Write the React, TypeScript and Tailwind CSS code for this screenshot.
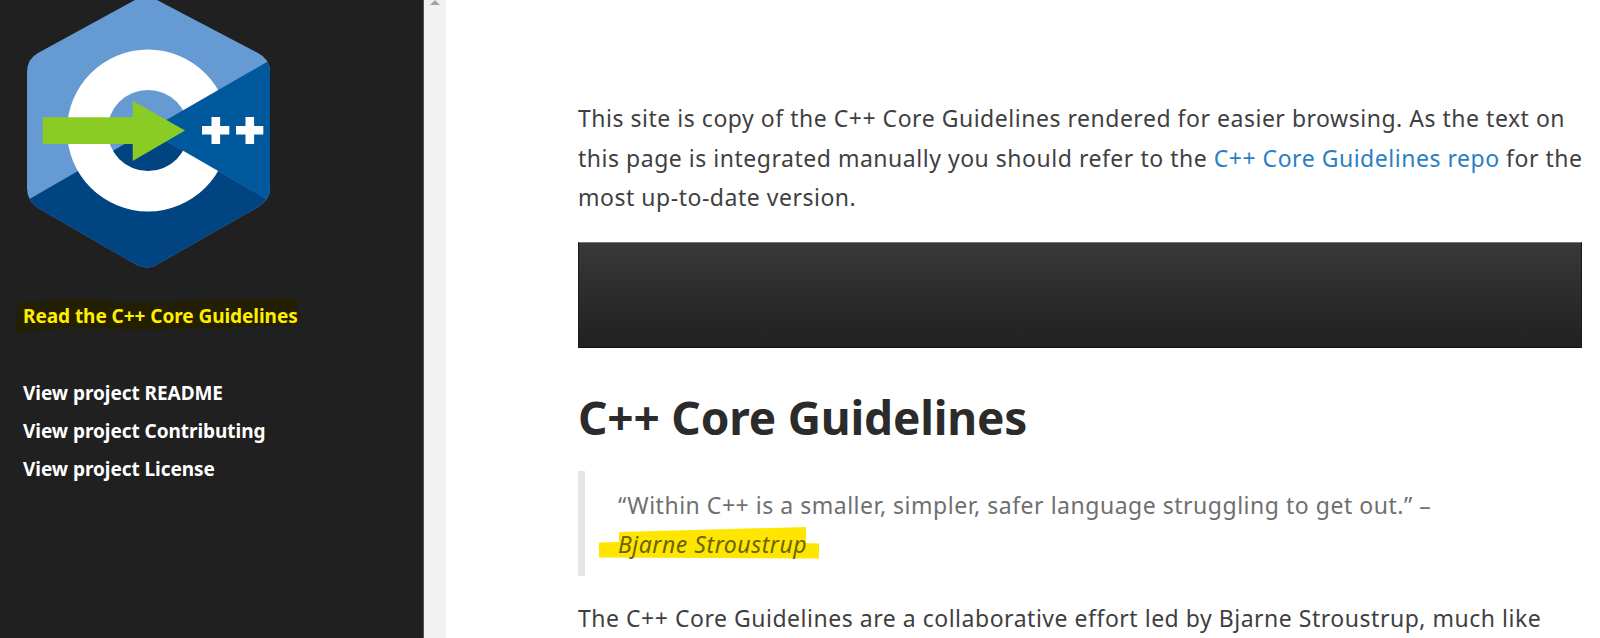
function Logo() {
  return (
    <svg width="272" height="268" viewBox="0 0 272 268" className="block shrink-0">
      <defs>
        <clipPath id="hex">
          <path d="M135 0 L38 53 Q27 59 27 72 L27 188 Q27 201 38 208 L135 264 Q148 271 158 264 L258 207 Q270 200 270 188 L270 72 Q270 59 258 53 L157 0 Q148 -6 135 0 Z" />
        </clipPath>
      </defs>
      <g clipPath="url(#hex)">
        <rect x="0" y="-10" width="300" height="290" fill="#659AD2" />
        <polygon points="148,130.5 0,216 0,300 300,300 300,218" fill="#004482" />
        <path
          fillRule="evenodd"
          fill="#ffffff"
          d="M148 49.5 A81 81 0 1 0 148 211.5 A81 81 0 1 0 148 49.5 Z M148 90 A40.5 40.5 0 1 1 148 171 A40.5 40.5 0 1 1 148 90 Z"
        />
        <polygon points="148,130.5 300,43 300,218" fill="#00599C" />
      </g>
      <polygon points="42.7,117.3 132.7,117.3 132.7,100.7 185,130.5 132.7,161 132.7,144 42.7,144" fill="#8ACB24" />
      <path d="M211.5 117h8.6v9h9.2v8.6h-9.2v9.4h-8.6v-9.4h-9.5v-8.6h9.5z" fill="#ffffff" />
      <path d="M245.5 117h8.6v9h9.2v8.6h-9.2v9.4h-8.6v-9.4h-9.5v-8.6h9.5z" fill="#ffffff" />
    </svg>
  );
}

const sans = { fontFamily: '"Noto Sans", sans-serif' };

export default function App() {
  return (
    <div className="flex h-[638px] w-[1600px] overflow-hidden bg-white" style={sans}>
      <aside className="flex w-[423px] shrink-0 flex-col bg-[#202020] pl-[23px] text-[19px] font-bold tracking-[-0.05px] text-white">
        <div className="-ml-[23px]">
          <Logo />
        </div>
        <div className="relative mt-[34px] h-[28px] leading-[28px] text-[#ffee00]">
          <svg className="absolute -left-[8px] -top-[5px]" width="300" height="40" viewBox="0 0 300 40">
            <polygon points="3,6 40,4 60,2 100,5 150,5 230,3 280,1 285,20 284,27 220,30 130,33 60,30 0,36" fill="#231f00" />
          </svg>
          <span className="relative">Read the C++ Core Guidelines</span>
        </div>
        <nav className="mt-[49px] flex flex-col gap-[10px] leading-[28px]">
          <a>View project README</a>
          <a>View project Contributing</a>
          <a>View project License</a>
        </nav>
      </aside>
      <div className="w-[23px] shrink-0 border-l border-[#555555] bg-[#f1f1f1]">
        <div className="mx-auto h-0 w-0 border-x-[5px] border-b-[5px] border-x-transparent border-b-[#a3a3a3]" />
      </div>
      <main className="min-w-0 flex-1 pl-[132px] pr-[18px] pt-[99px] text-[23px] leading-[39.6px] tracking-[0.52px] text-[#3f3f3f]">
        <p className="-mr-[8px]">
          This site is copy of the C++ Core Guidelines rendered for easier browsing. As the text on this page is integrated manually you should refer to the{" "}
          <a className="text-[#2a7ec4]">C++ Core Guidelines repo</a> for the most up-to-date version.
        </p>
        <div className="mt-[24px] h-[106px] border border-t-[#777777] border-x-[#1a1a1a] border-b-[#111111] bg-gradient-to-b from-[#383838] to-[#212121]" />
        <h1 className="mt-[36px] text-[46px] font-bold leading-[66px] tracking-[-0.2px] text-[#2b2b2b]">C++ Core Guidelines</h1>
        <blockquote className="relative mt-[21px] border-l-[7px] border-[#e5e5e5] pb-[11px] pl-[33px] pt-[15px] text-[#6f6f6f]">
          <svg className="absolute left-[14px] top-[56px]" width="230" height="40" viewBox="0 0 230 40">
            <polygon points="20,5 207,0 207,16 220,16.5 220,31.5 0,30.5 0,15.5 20,15" fill="#ffe600" />
          </svg>
          <span className="relative">
            “Within C++ is a smaller, simpler, safer language struggling to get out.” – <em className="whitespace-nowrap text-[#6a6300]">Bjarne Stroustrup</em>
          </span>
        </blockquote>
        <p className="mt-[23px]">The C++ Core Guidelines are a collaborative effort led by Bjarne Stroustrup, much like</p>
      </main>
    </div>
  );
}
